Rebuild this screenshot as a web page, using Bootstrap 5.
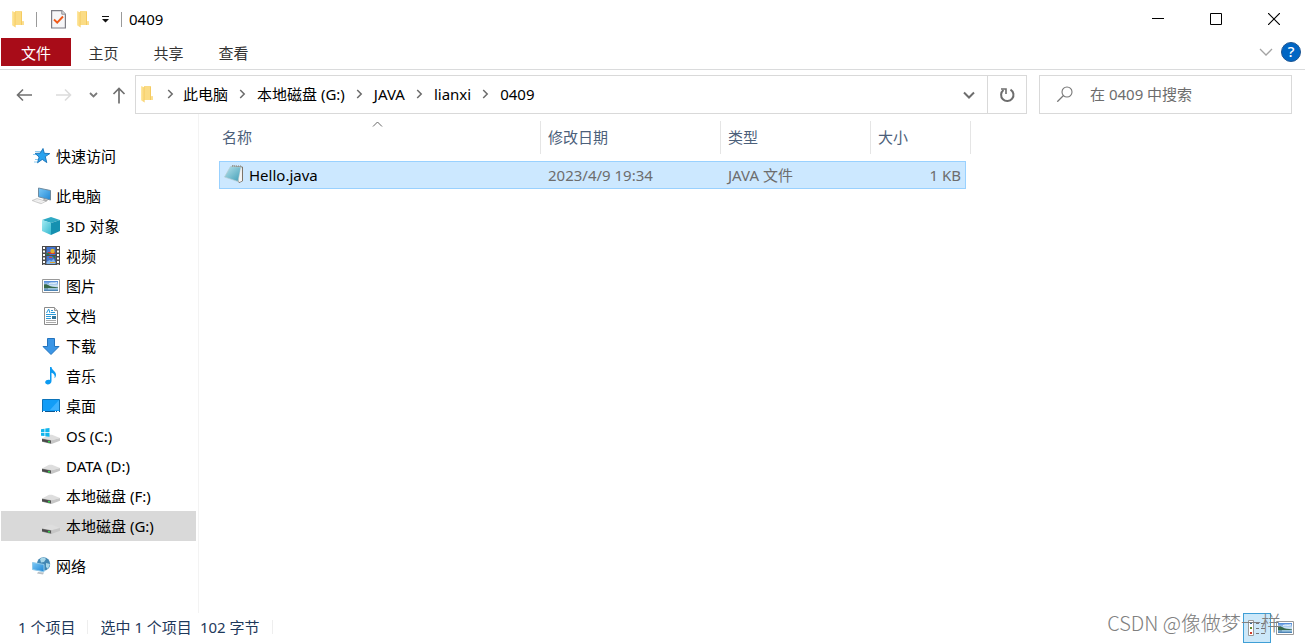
<!DOCTYPE html>
<html lang="zh-CN">
<head>
<meta charset="utf-8">
<meta name="viewport" content="width=device-width, initial-scale=1">
<title>0409</title>
<link href="https://cdn.jsdelivr.net/npm/bootstrap@5.3.0/dist/css/bootstrap.min.css" rel="stylesheet">
<style>
  body { font-family: "Noto Sans", "Noto Sans CJK SC", sans-serif; font-size: 15px; line-height: 20px; color: #000; background: #fff; }
  svg { display: block; flex: none; }
  button.plain { border: 0; background: none; padding: 0; color: inherit; display: flex; align-items: center; justify-content: center; }
  a { color: inherit; text-decoration: none; }
  .titlebar { height: 38px; padding-right: 2px; }
  .quick-tools { padding-left: 12px; gap: 11px; }
  .rule { width: 1px; height: 15px; background: #9a9a9a; }
  .rule.wide { margin-right: 3px; }
  .win-title { margin-left: -4px; }
  .win-btn { width: 58px; height: 38px; }
  .ribbon { height: 32px; border-bottom: 1px solid #dadbdc; padding-left: 1px; }
  .ribbon .nav-link { color: #333; width: 65px; height: 28px; padding: 5px 0 3px; text-align: center; }
  .ribbon .nav-link.file { width: 70px; background: #a80c18; color: #fff; }
  .help { width: 20px; height: 20px; }
  .addressbar { padding: 5px 13px 0 16px; height: 44px; }
  .history { width: 119px; }
  .history .forward { margin-left: 22px; }
  .history .recent { margin-left: 15px; }
  .history .up { margin-left: 13px; }
  .box { border: 1px solid #d9d9d9; height: 39px; }
  .crumbs { padding: 0 0 2px 5px; }
  .crumb-sep { width: 29px; display: flex; justify-content: center; }
  .older { width: 36px; }
  .refresh { width: 39px; border-left: 1px solid #d9d9d9 !important; }
  .search { width: 253px; margin-left: 12px; padding: 0 16px 2px; gap: 16px; }
  .search input { border: 0; outline: 0; padding: 0; width: 100%; min-width: 0; color: #6d6d6d; background: none; }
  .search input::placeholder { color: #6d6d6d; opacity: 1; }
  .tree { width: 199px; border-right: 1px solid #f3f3f3; padding: 27px 2px 0 1px; }
  .tree a { display: flex; align-items: center; height: 30px; padding-left: 31px; gap: 5px; }
  .tree a.sub { padding-left: 40px; }
  .tree a.active { background: #d9d9d9; }
  .tree .group { margin-bottom: 10px; }
  .files { width: 752px; table-layout: fixed; margin: 7px 0 0 20px; border-collapse: separate; border-spacing: 0; }
  .files .c-name { width: 322px; }
  .files .c-date { width: 180px; }
  .files .c-type { width: 150px; }
  .files .c-size { width: 95px; }
  .files th { font-weight: 400; color: #4c607a; padding: 0 0 7px; position: relative; }
  .files th span { display: flex; align-items: center; height: 33px; border-right: 1px solid #e5e5e5; padding: 0 0 2px 7px; }
  .files th:first-child span { padding-left: 3px; }
  .files .sort { position: absolute; left: 153px; top: 0; }
  .files td { height: 28px; padding: 0 0 0 7px; color: #6d6d6d; }
  .files td.picked { background: #cce8ff; border: solid #99d1ff; border-width: 1px 0; }
  .files td.first { border-left-width: 1px; padding-left: 4px; color: #000; }
  .files td.size { border-right-width: 1px; padding-right: 4px; }
  .file-name { gap: 5px; }
  .status { height: 30px; padding-left: 18px; color: #1e395b; }
  .status .info { gap: 12px; padding-bottom: 2px; }
  .status .divider { width: 1px; height: 14px; background: #eee; }
  .view { width: 28px; height: 30px; }
  .view.on { background: #cce8f9 !important; border: 1px solid #3f9fd6 !important; }
  .view.large { width: 34px; padding-right: 7px !important; }
  .stamp { position: absolute; right: 24px; bottom: 7px; font: 300 20px/26px "Noto Sans CJK SC", sans-serif; color: #808080; pointer-events: none; }
</style>
</head>
<body class="min-vh-100 d-flex flex-column position-relative overflow-hidden">

<svg width="0" height="0" class="position-absolute" aria-hidden="true">
  <defs>
    <linearGradient id="gFold" x1="0" x2="1"><stop offset="0" stop-color="#ffe9a3"/><stop offset="1" stop-color="#f7cf68"/></linearGradient>
    <linearGradient id="gSky" x1="0" y1="0" x2="0" y2="1"><stop offset="0" stop-color="#4a86d8"/><stop offset=".5" stop-color="#d5e9f7"/><stop offset="1" stop-color="#3d78ad"/></linearGradient>
    <linearGradient id="gBlue" x1="0" y1="0" x2="1" y2="1"><stop offset="0" stop-color="#7cc9f7"/><stop offset="1" stop-color="#1f86d4"/></linearGradient>
    <linearGradient id="gNote" x1="0" y1="0" x2="1" y2="1"><stop offset="0" stop-color="#b9e3ec"/><stop offset="1" stop-color="#3f9db6"/></linearGradient>
    <linearGradient id="gCube" x1="0" y1="0" x2="1" y2="1"><stop offset="0" stop-color="#a5ecf3"/><stop offset="1" stop-color="#35b8cf"/></linearGradient>
    <symbol id="folder" viewBox="0 0 13 18"><path d="M3 1.200h7v10.200h2V15H3z" fill="#f5cb60"/><path d="M0 1 3.600 2.600V17.600L0 15.200z" fill="url(#gFold)"/><path d="M3.600 1.200H9V15H3.600z" fill="#fbdc85"/><path d="M10 11.500h2V15h-2z" fill="#fbdf92"/></symbol>
    <symbol id="chev" viewBox="0 0 7 10"><path d="M1.200 1 5.200 5l-4 4" fill="none" stroke="#6b6b6b" stroke-width="1.500"/></symbol>
    <symbol id="picture" viewBox="0 0 18 14"><path d="M.5.5h17v13H.5z" fill="#fff" stroke="#999"/><path d="M2 2h14v10H2z" fill="url(#gSky)"/><path d="M2 5.500c2-.8 3.500 0 5 1s5 1.500 9 2v.8H2z" fill="#37694b"/><path d="M7 4c3-1 5 0 8-1v1.500c-3 .8-5 0-8 .5z" fill="#e7f3fa"/><path d="M6 9.200h10v1.200H6z" fill="#a6cfe5"/></symbol>
    <symbol id="drive" viewBox="0 0 18 10"><path d="M0 4.500 7 .8h3L18 4 9.500 6.200z" fill="#dedede"/><path d="M0 4.500 9.500 6.200V10L0 7.800z" fill="#8b8b8b"/><path d="M0 5 8.800 6.800v2.400L0 7.200z" fill="#4a4a4a"/><path d="M9.500 6.200 18 4v2.800L9.500 10z" fill="#c6c6c6"/><path d="M6 7h2v1.600H6z" fill="#32d14a"/></symbol>
  </defs>
</svg>

<header class="titlebar d-flex align-items-center">
  <div class="quick-tools d-flex align-items-center h-100 flex-grow-1">
    <svg width="13" height="18"><use href="#folder"/></svg>
    <span class="rule wide"></span>
    <button class="plain" aria-label="属性"><svg width="15" height="19" viewBox="0 0 15 19"><path d="M.6.6h10.200l3.600 3.600v13.800H.6z" fill="#f6f6f8" stroke="#7d7d85" stroke-width="1.200"/><path d="M10.800.6v3.600h3.600" fill="#ddd" stroke="#8d8d95"/><path d="m3 9.500 3.200 3.200L12 6.500" fill="none" stroke="#f05a1a" stroke-width="1.900"/></svg></button>
    <button class="plain" aria-label="新建文件夹"><svg width="13" height="18"><use href="#folder"/></svg></button>
    <button class="plain" aria-label="自定义快速访问工具栏"><svg width="9" height="8" viewBox="0 0 9 8"><path d="M1 1h7v1H1zM1 4h7L4.500 7.500z" fill="#111"/></svg></button>
    <span class="rule"></span>
    <span class="win-title">0409</span>
  </div>
  <button class="plain win-btn" aria-label="最小化"><svg width="12" height="12"><path d="M0 5h12v1H0z"/></svg></button>
  <button class="plain win-btn" aria-label="最大化"><svg width="12" height="12"><path d="M.5.5h11v11H.5z" fill="none" stroke="#000"/></svg></button>
  <button class="plain win-btn" aria-label="关闭"><svg width="12" height="12"><path d="M0 0 12 12M12 0 0 12" stroke="#000" stroke-width="1.200"/></svg></button>
</header>

<nav class="ribbon nav flex-nowrap">
  <a class="nav-link file" href="#">文件</a>
  <a class="nav-link" href="#">主页</a>
  <a class="nav-link" href="#">共享</a>
  <a class="nav-link" href="#">查看</a>
  <div class="ms-auto d-flex align-items-center pe-1 pb-1">
    <button class="plain me-2" aria-label="展开功能区"><svg width="14" height="8" viewBox="0 0 14 8"><path d="m1 1 6 6 6-6" fill="none" stroke="#a3a3a3" stroke-width="1.300"/></svg></button>
    <button class="plain" aria-label="帮助"><svg class="help" viewBox="0 0 20 20"><circle cx="10" cy="10" r="9.500" fill="#0066c4" stroke="#1d5592"/><text x="10" y="15" text-anchor="middle" font-size="15" font-weight="500" fill="#fff">?</text></svg></button>
  </div>
</nav>

<div class="addressbar d-flex">
  <div class="history d-flex align-items-center">
    <button class="plain" aria-label="后退"><svg width="18" height="14" viewBox="0 0 18 14"><path d="M16 7H2M7 1.500 1.500 7 7 12.500" fill="none" stroke="#707070" stroke-width="1.600"/></svg></button>
    <button class="plain forward" aria-label="前进"><svg width="18" height="14" viewBox="0 0 18 14"><path d="M0 7h14M9 1.500 14.500 7 9 12.500" fill="none" stroke="#dcdcdc" stroke-width="1.600"/></svg></button>
    <button class="plain recent" aria-label="最近浏览的位置"><svg width="10" height="8" viewBox="0 0 10 8"><path d="m1 2 3.500 3.500L8 2" fill="none" stroke="#7a7a7a" stroke-width="1.800"/></svg></button>
    <button class="plain up" aria-label="上移"><svg width="14" height="18" viewBox="0 0 14 18"><path d="M7 17.500V3M1.500 8 7 2.500 12.500 8" fill="none" stroke="#707070" stroke-width="1.700"/></svg></button>
  </div>
  <div class="box d-flex flex-grow-1">
    <div class="crumbs d-flex align-items-center flex-grow-1">
      <svg width="13" height="18"><use href="#folder"/></svg>
      <span class="crumb-sep ps-1"><svg width="7" height="10"><use href="#chev"/></svg></span>
      <a href="#">此电脑</a>
      <span class="crumb-sep"><svg width="7" height="10"><use href="#chev"/></svg></span>
      <a href="#">本地磁盘 (G:)</a>
      <span class="crumb-sep"><svg width="7" height="10"><use href="#chev"/></svg></span>
      <a href="#">JAVA</a>
      <span class="crumb-sep"><svg width="7" height="10"><use href="#chev"/></svg></span>
      <a href="#">lianxi</a>
      <span class="crumb-sep"><svg width="7" height="10"><use href="#chev"/></svg></span>
      <a href="#">0409</a>
    </div>
    <button class="plain older" aria-label="以前的位置"><svg width="12" height="8" viewBox="0 0 12 8"><path d="m1 1.500 5 5 5-5" fill="none" stroke="#6d6d6d" stroke-width="2"/></svg></button>
    <button class="plain refresh" aria-label="刷新"><svg width="16" height="16" viewBox="0 0 16 16"><path d="M11.500 2.600A6.200 6.200 0 1 1 4.500 3" fill="none" stroke="#6d6d6d" stroke-width="2"/><path d="M2 2h5v5" fill="none" stroke="#6d6d6d" stroke-width="1.600"/></svg></button>
  </div>
  <label class="box search d-flex align-items-center">
    <svg width="18" height="17" viewBox="0 0 18 17"><circle cx="11" cy="7" r="5" fill="none" stroke="#777" stroke-width="1.100"/><path d="M7.500 10.500 1.300 16.700" stroke="#777" stroke-width="1.300"/></svg>
    <input type="text" placeholder="在 0409 中搜索" aria-label="搜索">
  </label>
</div>

<div class="d-flex flex-grow-1">
  <nav class="tree flex-shrink-0">
    <a class="group" href="#"><svg width="19" height="18" viewBox="0 0 19 18"><path d="M3 4.500h6M1 7.500h5M3 12.500h3M2 15h3" stroke="#8ccbf0"/><path d="m11 1.500 1.300 4.800 5.500.3-4.500 3 1.500 6-4.500-3.200-4.800 3.400 1.600-5.800-4-3.600 5.200-.3z" fill="#2ba3ee" stroke="#1670b6" stroke-width=".9"/></svg>快速访问</a>
    <a href="#"><svg width="19" height="18" viewBox="0 0 19 18"><path d="M6.500 1 18.500 3.500v9.500L6.500 9.800z" fill="url(#gBlue)" stroke="#6f8ba0"/><path d="m12 12 4 1-2 2-4-1.500z" fill="#aaa"/><path d="M0 13.500 5 11.500l9 2.800-5 2.500z" fill="#ddd" stroke="#bbb" stroke-width=".6"/><path d="m2.500 13.400 8 2.200M4.500 12.600l8 2.200" stroke="#fff" stroke-width=".7"/></svg>此电脑</a>
    <a class="sub" href="#"><svg width="20" height="18" viewBox="0 0 20 18"><path d="M1 3 10 0l9 3-9 3z" fill="#2fa9c4"/><path d="m1 3 9 3v12l-9-4z" fill="url(#gCube)"/><path d="m19 3-9 3v12l9-4z" fill="#1590b0"/></svg>3D 对象</a>
    <a class="sub" href="#"><svg width="20" height="20" viewBox="0 0 20 20"><path d="M1 0h18v19H1z" fill="#4b4b4b"/><path d="M3 1v18M17 1v18" stroke="#fff" stroke-width="2" stroke-dasharray="2 1.500"/><path d="M5.500 1h9v8h-9zM5.500 10h9v8h-9z" fill="#4475cf"/><path d="M7 6h7v2H6z" fill="#cf3c2f"/><circle cx="11.500" cy="5" r="2.200" fill="#ddb52f"/><path d="M5.500 7h3v2h-3zM11 10h3v3z" fill="#2e7943"/><path d="M8 11h3v1H8z" fill="#d14a2e"/><path d="m5.500 16 3-2 2 1 2-2 2 3v2h-9z" fill="#83b5ea"/><path d="M9 16h5v1H9z" fill="#dfa430"/></svg>视频</a>
    <a class="sub" href="#"><svg width="20" height="14"><use href="#picture"/></svg>图片</a>
    <a class="sub" href="#"><svg width="20" height="18" viewBox="0 0 20 18"><path d="M3.500.5h10l3 3v14h-13z" fill="#fff" stroke="#8b8b8b"/><path d="M13.500.5v3h3" fill="#ddd" stroke="#999"/><path d="m5.500 6 2.200-4L9 6M10 3.500h2M10 5.500h4M5 7.500h10M5 9.500h5M5 11.500h5" fill="none" stroke="#2a99d8"/><path d="M5 13.500h10M5 15.500h10" stroke="#aaa"/><path d="M11 9h4v3h-4z" fill="#33769b"/></svg>文档</a>
    <a class="sub" href="#"><svg width="20" height="17" viewBox="0 0 20 17"><path d="M6.500.5h7v8H18l-8 8-8-8h4.500z" fill="#3b96e6" stroke="#2373bd"/></svg>下载</a>
    <a class="sub" href="#"><svg width="20" height="18" viewBox="0 0 20 18"><path d="M9 0h1.500c.4 3.500 4.800 4.300 4.500 8-.1 1.500-.7 2.600-1.500 3.300.8-3-.5-4.800-3-5.600V14c0 2.500-2 3.500-4 3.400-1.500-.1-2.500-1-2.300-2.300C4.600 13 7 12.300 9 13z" fill="#0c9af1"/></svg>音乐</a>
    <a class="sub" href="#"><svg width="20" height="14" viewBox="0 0 20 14"><path d="M1.500.5h17v12h-17z" fill="#129df7" stroke="#0c73b9"/><path d="M18 1v10H9z" fill="#3db2ff"/><path d="M1 12h18v1H1z" fill="#0a5590"/><path d="M2 12h2v1H2zM14 12h1v1h-1zM16 12h2v1h-2z" fill="#fff"/></svg>桌面</a>
    <a class="sub" href="#"><svg width="20" height="16" viewBox="0 0 20 16"><use href="#drive" x="1" y="6" width="18" height="10"/><path d="M0 1.200 3.500.7v3.300H0zM4.300.6 8.500 0v4H4.300zM0 4.800h3.500v3.300L0 7.700zM4.300 4.800h4.200v4L4.300 8.200z" fill="#12b5ec"/></svg>OS (C:)</a>
    <a class="sub" href="#"><svg width="20" height="16"><use href="#drive" x="1" y="6" width="18" height="10"/></svg>DATA (D:)</a>
    <a class="sub" href="#"><svg width="20" height="16"><use href="#drive" x="1" y="6" width="18" height="10"/></svg>本地磁盘 (F:)</a>
    <a class="sub active group" href="#" aria-current="page"><svg width="20" height="16"><use href="#drive" x="1" y="6" width="18" height="10"/></svg>本地磁盘 (G:)</a>
    <a href="#"><svg width="19" height="18" viewBox="0 0 19 18"><circle cx="11.500" cy="7" r="6.700" fill="#4287b3"/><path d="M8 2c2-2 5-1.500 6 0l-2 3-3 .5zM14 6l4 1-2 5-2-2z" fill="#a9d7e9"/><path d="M.5 5.500 12 7.500v7.300L.5 12.500z" fill="url(#gBlue)" stroke="#8fc9ea"/><path d="m6 15 6 .5-1 2-6-1z" fill="#b8bfc4"/></svg>网络</a>
  </nav>

  <main class="flex-grow-1">
    <table class="files">
      <colgroup><col class="c-name"><col class="c-date"><col class="c-type"><col class="c-size"><col></colgroup>
      <thead>
        <tr>
          <th scope="col" aria-sort="ascending"><span>名称</span><svg class="sort" width="11" height="6" viewBox="0 0 11 6"><path d="m1 5.500 4.500-4.500L10 5.500" fill="none" stroke="#666"/></svg></th>
          <th scope="col"><span>修改日期</span></th>
          <th scope="col"><span>类型</span></th>
          <th scope="col" colspan="2"><span>大小</span></th>
        </tr>
      </thead>
      <tbody>
        <tr>
          <td class="picked first"><div class="file-name d-flex align-items-center"><svg width="20" height="20" viewBox="0 0 20 20"><path d="m8 1 10.500 1v14L15 17.500z" fill="#eee" stroke="#7d7468"/><path d="M6.500 1.500 17 2l-3 14.500L.5 12z" fill="url(#gNote)" stroke="#b5cbd1" stroke-width=".7"/><path d="M17 2.500 14.500 17l3.500-1z" fill="#f5f5f5"/><path d="M8 1h10" stroke="#8b8578" stroke-dasharray="1 1"/></svg><span>Hello.java</span></div></td>
          <td class="picked">2023/4/9 19:34</td>
          <td class="picked">JAVA 文件</td>
          <td class="picked size text-end">1 KB</td>
          <td></td>
        </tr>
      </tbody>
    </table>
  </main>
</div>

<footer class="status d-flex align-items-center">
  <div class="info d-flex align-items-center">
    <span>1 个项目</span>
    <span class="divider"></span>
    <span>选中 1 个项目<span class="ms-2">102 字节</span></span>
    <span class="divider"></span>
  </div>
  <div class="ms-auto d-flex align-items-center">
    <button class="plain view on" aria-label="详细信息"><svg width="18" height="16" viewBox="0 0 18 16"><path d="M.5.500h5v15h-5z" fill="#fff" stroke="#999"/><path d="M2 2h2v2H2z" fill="#3c6c9c"/><path d="M2 7h2v2H2z" fill="#5f8b2c"/><path d="M2 12h2v2H2z" fill="#cf3b2a"/><path d="M8 3.500h3M13 3.500h4M8 8.500h3M13 8.500h4M8 13.500h3M13 13.500h4" stroke="#777"/></svg></button>
    <button class="plain view large" aria-label="大图标"><svg width="18" height="14"><use href="#picture"/></svg></button>
  </div>
</footer>
<div class="stamp">CSDN @像做梦一样</div>

<script src="https://cdn.jsdelivr.net/npm/bootstrap@5.3.0/dist/js/bootstrap.bundle.min.js"></script>
</body>
</html>
